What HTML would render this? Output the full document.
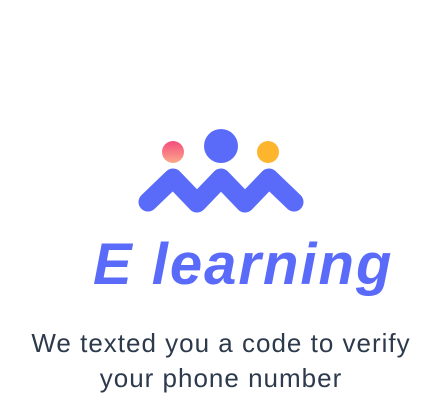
<!DOCTYPE html>
<html><head><style>
html,body{margin:0;padding:0;background:#fff;width:442px;height:418px;overflow:hidden;position:relative}
.t{position:absolute;font-family:"Liberation Sans",sans-serif;white-space:nowrap}
.brand{top:231px;left:93px;font-size:58px;font-weight:bold;font-style:italic;color:#5a6bfa;letter-spacing:2px}
.sub{left:0;width:442px;text-align:center;font-size:26px;color:#2d3a4c;line-height:35px;top:326px;letter-spacing:1px}
</style></head><body>
<svg width="442" height="418" style="position:absolute;left:0;top:0">
<defs><linearGradient id="g" x1="0" y1="0" x2="0" y2="1"><stop offset="0" stop-color="#f44b7c"/><stop offset="1" stop-color="#fba98a"/></linearGradient></defs>
<circle cx="173" cy="152" r="11" fill="url(#g)"/>
<circle cx="221" cy="146" r="17" fill="#5a6bfa"/>
<circle cx="268" cy="152" r="11" fill="#fdb52d"/>
<polyline points="148,202 173,178 197,203 221,178 245,203 269,178 294,202" fill="none" stroke="#5a6bfa" stroke-width="19" stroke-linecap="round" stroke-linejoin="round"/>
</svg>
<div class="t brand">E learning</div>
<div class="t sub">We texted you a code to verify<br>your phone number</div>
</body></html>
